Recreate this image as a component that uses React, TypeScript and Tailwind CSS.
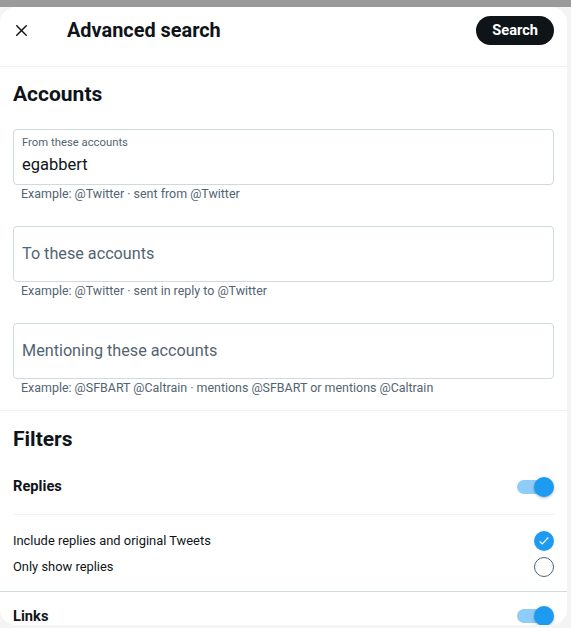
import { X } from "lucide-react";

const font = { fontFamily: "Roboto, 'Liberation Sans', sans-serif" };

function Field({ label, value, hint }: { label: string; value?: string; hint: string }) {
  return (
    <div className="mt-[24px] first:mt-0">
      <div className="h-[56px] rounded-[4px] border border-[#cfd9de] px-[8px] flex flex-col justify-center">
        {value ? (
          <>
            <div className="text-[11.3px] leading-[16px] text-[#536471] mt-[-3px]">{label}</div>
            <div className="text-[16.5px] leading-[22px] text-[#0f1419] mt-[3px]">{value}</div>
          </>
        ) : (
          <div className="text-[16.2px] leading-[22px] text-[#536471]">{label}</div>
        )}
      </div>
      <div className="px-[8px] pt-[1px] text-[12.45px] leading-[16px] text-[#536471]">{hint}</div>
    </div>
  );
}

function Toggle() {
  return (
    <div className="relative w-[38px] h-[20px] flex items-center">
      <div className="w-[30px] h-[14px] ml-[1px] rounded-full bg-[#8ecdf8]" />
      <div className="absolute right-0 top-0 w-[20px] h-[20px] rounded-full bg-[#1d9bf0] shadow-[0_1px_3px_rgba(0,0,0,0.3)]" />
    </div>
  );
}

export default function App() {
  return (
    <div
      style={font}
      className="h-[628px] overflow-hidden pt-[7px] pr-[4px] bg-[linear-gradient(#9a9a9a_0,#9a9a9a_7px,#f4f4f4_7px)]"
    >
      <div className="bg-white rounded-[16px] h-[618px] overflow-hidden text-[#0f1419]">
        {/* header */}
        <div className="h-[60px] pb-[12px] flex items-center px-[13px] border-b border-[#eff3f4]">
          <X className="w-[19px] h-[19px] ml-[-1px] text-[#0f1419]" strokeWidth={1.8} />
          <h1 className="ml-[36px] text-[19.9px] font-bold leading-[24px]">Advanced search</h1>
          <button className="ml-auto h-[29px] px-[16px] rounded-full bg-[#0f1419] text-white text-[14.6px] font-bold">
            Search
          </button>
        </div>

        {/* accounts */}
        <div className="px-[13px] pt-[14px] pb-[14px] border-b border-[#eff3f4]">
          <h2 className="text-[21px] font-bold leading-[24px] mt-[1px] mb-[-1px]">Accounts</h2>
          <div className="mt-[24px]">
            <Field label="From these accounts" value="egabbert" hint="Example: @Twitter · sent from @Twitter" />
            <Field label="To these accounts" hint="Example: @Twitter · sent in reply to @Twitter" />
            <Field label="Mentioning these accounts" hint="Example: @SFBART @Caltrain · mentions @SFBART or mentions @Caltrain" />
          </div>
        </div>

        {/* filters */}
        <div className="px-[13px] pt-[16px]">
          <h2 className="text-[21px] font-bold leading-[24px]">Filters</h2>
          <div className="h-[52px] mt-[12px] pb-[4px] flex items-center justify-between border-b border-[#eff3f4]">
            <span className="text-[14.7px] font-bold">Replies</span>
            <Toggle />
          </div>
          <div className="pt-[13px] pb-[11px]">
            <div className="h-[26px] flex items-center justify-between">
              <span className="text-[12.9px]">Include replies and original Tweets</span>
              <div className="w-[20px] h-[20px] rounded-full bg-[#1d9bf0] flex items-center justify-center">
                <svg viewBox="0 0 24 24" className="w-[14px] h-[14px]" fill="none" stroke="white" strokeWidth={2}>
                  <path d="M4.5 12.5l4.5 4.5 10.5-11" />
                </svg>
              </div>
            </div>
            <div className="h-[26px] flex items-center justify-between">
              <span className="text-[12.9px]">Only show replies</span>
              <div className="w-[20px] h-[20px] rounded-full border-[1.5px] border-[#536471]" />
            </div>
          </div>
        </div>
        <div className="border-t border-[#cfd9de]" />
        <div className="px-[13px] h-[48px] flex items-center justify-between">
          <span className="text-[14.7px] font-bold">Links</span>
          <Toggle />
        </div>
      </div>
    </div>
  );
}
